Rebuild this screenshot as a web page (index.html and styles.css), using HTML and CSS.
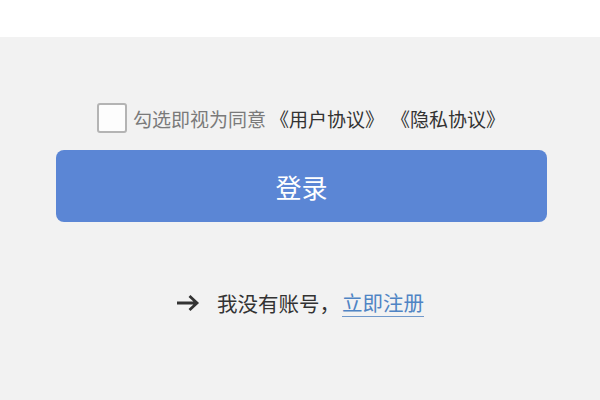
FILE: index.html
```html
<!DOCTYPE html>
<html lang="zh-CN">
<head>
<meta charset="utf-8">
<link rel="stylesheet" href="styles.css">
</head>
<body>
<div class="topbar"></div>
<main class="content">
  <div class="agree">
    <span class="checkbox"></span>
    <span class="agree-text">勾选即视为同意</span><span class="doc doc-1">《用户协议》</span><span class="doc doc-2">《隐私协议》</span>
  </div>
  <button class="login">登录</button>
  <div class="register">
    <svg class="arrow" width="24" height="20" viewBox="0 0 24 20"><path d="M1 10 H21 M13.5 3 L21 10 L13.5 17" fill="none" stroke="#333" stroke-width="2.8" stroke-linecap="butt" stroke-linejoin="miter"/></svg>
    <span class="reg-text">我没有账号，</span><a class="reg-link">立即注册</a>
  </div>
</main>
</body>
</html>
```
FILE: styles.css
```css
html, body {
  margin: 0;
  padding: 0;
  background: #f2f2f2;
  font-family: "Noto Sans CJK SC", "Noto Sans", sans-serif;
}
.topbar {
  height: 37px;
  background: #ffffff;
}
.content {
  display: flex;
  flex-direction: column;
  align-items: center;
}
.agree {
  margin-top: 66px;
  height: 30px;
  display: flex;
  align-items: center;
  font-size: 19px;
  margin-left: 2px;
}
.checkbox {
  width: 26px;
  height: 26px;
  border: 2px solid #b4b4b4;
  border-radius: 3px;
  background: #fdfdfd;
  margin-right: 6px;
}
.agree-text {
  color: #7a7a7a;
}
.doc {
  color: #333333;
}
.doc-1 {
  margin-left: 4px;
}
.doc-2 {
  margin-left: 7px;
}
.login {
  margin-top: 17px;
  width: 491px;
  height: 72px;
  margin-left: 3px;
  border: none;
  border-radius: 8px;
  background: #5b86d5;
  color: #ffffff;
  font-family: "Noto Sans CJK SC", "Noto Sans", sans-serif;
  font-size: 26px;
  padding: 0;
}
.register {
  margin-top: 67px;
  height: 28px;
  display: flex;
  align-items: center;
  font-size: 20.5px;
  margin-left: 0;
}
.arrow {
  margin-right: 17px;
}
.reg-text {
  color: #333333;
}
.reg-link {
  color: #4f84c4;
  border-bottom: 2px solid #7199cb;
  line-height: 26px;
  padding-bottom: 1px;
  margin-left: 2px;
}
```
